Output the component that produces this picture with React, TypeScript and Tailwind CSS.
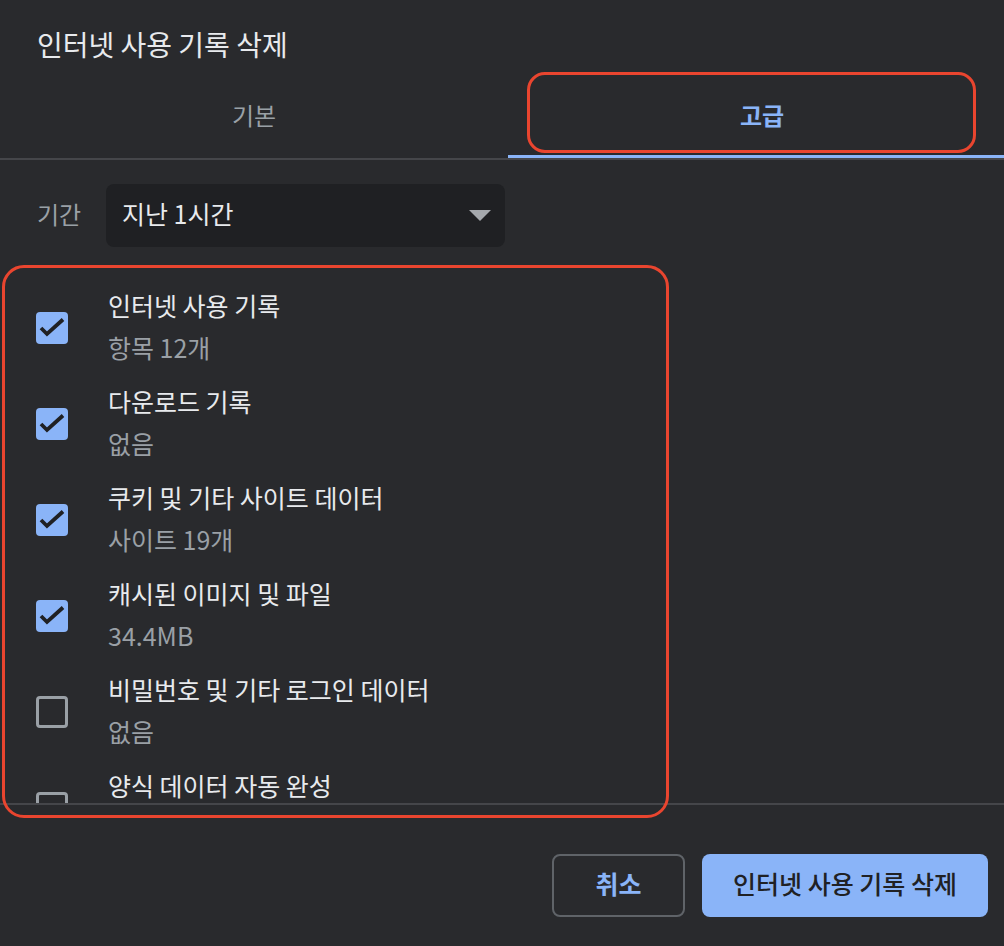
import React from "react";

const rows = [
  { title: "인터넷 사용 기록", sub: "항목 12개", checked: true },
  { title: "다운로드 기록", sub: "없음", checked: true },
  { title: "쿠키 및 기타 사이트 데이터", sub: "사이트 19개", checked: true },
  { title: "캐시된 이미지 및 파일", sub: "34.4MB", checked: true },
  { title: "비밀번호 및 기타 로그인 데이터", sub: "없음", checked: false },
  { title: "양식 데이터 자동 완성", sub: "없음", checked: false },
];

function Checkbox({ checked }: { checked: boolean }) {
  if (checked) {
    return (
      <div className="w-[32px] h-[32px] shrink-0 rounded-[4px] bg-[#8ab4f8]">
        <svg width="32" height="32" viewBox="0 0 32 32">
          <path d="M5 16l6 6L27 7.5" fill="none" stroke="#202124" strokeWidth="3.8" strokeLinecap="butt" strokeLinejoin="miter" />
        </svg>
      </div>
    );
  }
  return <div className="w-[32px] h-[32px] shrink-0 rounded-[4px] border-[3px] border-[#9aa0a6]" />;
}

export default function App() {
  return (
    <div
      className="relative w-[1004px] h-[946px] overflow-hidden bg-[#292a2d]"
      style={{ fontFamily: '"Noto Sans CJK KR", "Noto Sans", sans-serif' }}
    >
      <div className="w-[1016px] flex flex-col">
        <div className="pt-[23px] pl-[37px] leading-[42px] text-[28px] text-[#e8eaed]">인터넷 사용 기록 삭제</div>
        <div className="flex h-[93px]">
          <div className="w-[508px] flex flex-col">
            <div className="flex-1 flex items-center justify-center pt-[10px] text-[24px] text-[#9aa0a6]">기본</div>
            <div className="h-[3px]" />
          </div>
          <div className="w-[508px] flex flex-col">
            <div className="flex-1 flex items-center justify-center pt-[10px] text-[24px] font-semibold text-[#8ab4f8]">고급</div>
            <div className="h-[3px] bg-[#8ab4f8]" />
          </div>
        </div>
        <div className="h-[2px] bg-[#45464a]" />
        <div className="mt-[24px] pl-[37px] flex items-center h-[63px]">
          <div className="w-[69px] -mt-[4px] text-[24px] text-[#9aa0a6]">기간</div>
          <div className="w-[399px] h-[63px] rounded-[8px] bg-[#1f2023] flex items-center justify-between pl-[16px] pr-[14px]">
            <span className="-mt-[3px] text-[25px] text-[#e8eaed]">지난 1시간</span>
            <svg width="22" height="11" viewBox="0 0 22 11" className="w-[22px] h-[11px]">
              <path d="M0 0h22L11 11z" fill="#a5a8ad" />
            </svg>
          </div>
        </div>
        <div className="mt-[33px] h-[523px] overflow-hidden flex flex-col">
          {rows.map((r) => (
            <div key={r.title} className="h-[96px] shrink-0 flex items-center pl-[36px] gap-[40px]">
              <Checkbox checked={r.checked} />
              <div className="flex flex-col -mt-[5px]">
                <div className="leading-[42px] text-[25px] text-[#e8eaed]">{r.title}</div>
                <div className="leading-[42px] text-[25px] text-[#9aa0a6]">{r.sub}</div>
              </div>
            </div>
          ))}
        </div>
        <div className="h-[2px] bg-[#45464a]" />
        <div className="mt-[49px] flex justify-end gap-[17px] pr-[28px]">
          <div className="w-[133px] h-[63px] rounded-[8px] border-2 border-[#5f6368] flex items-center justify-center pb-[4px] text-[25px] font-semibold text-[#8ab4f8]">
            취소
          </div>
          <div className="w-[286px] h-[63px] rounded-[8px] bg-[#8ab4f8] flex items-center justify-center pb-[4px] text-[25px] font-medium text-[#202124]">
            인터넷 사용 기록 삭제
          </div>
        </div>
      </div>
      <div className="absolute left-[527px] top-[72px] w-[449px] h-[81px] rounded-[18px] border-[3px] border-[#e9452f]" />
      <div className="absolute left-[2px] top-[265px] w-[667px] h-[553px] rounded-[22px] border-[3px] border-[#e9452f]" />
    </div>
  );
}
